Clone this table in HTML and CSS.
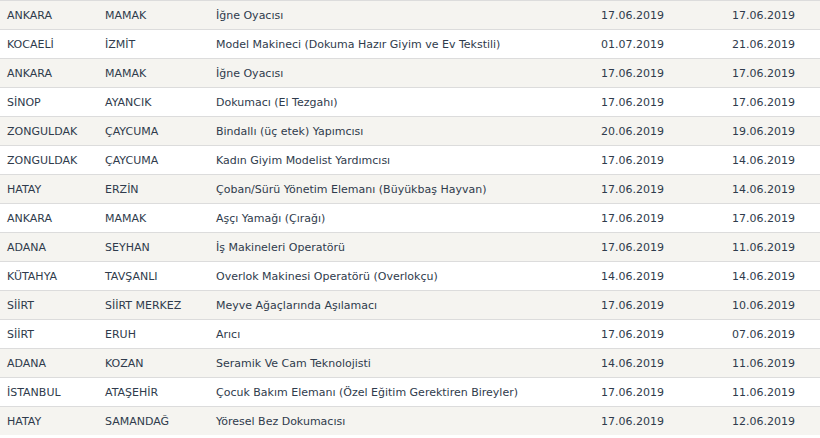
FILE: index.html
```html
<!DOCTYPE html>
<html lang="tr">
<head>
  <meta charset="UTF-8" />
  <meta name="viewport" content="width=device-width, initial-scale=1.0" />
  <title>İş İlanları</title>
  <link rel="stylesheet" href="styles.css">
</head>
<body>
  <table class="jobs">
    <colgroup>
      <col class="c-il" />
      <col class="c-ilce" />
      <col class="c-meslek" />
      <col class="c-tarih" />
      <col class="c-son" />
    </colgroup>
    <tbody>
      <tr><td>ANKARA</td><td>MAMAK</td><td>İğne Oyacısı</td><td>17.06.2019</td><td>17.06.2019</td></tr>
      <tr><td>KOCAELİ</td><td>İZMİT</td><td>Model Makineci (Dokuma Hazır Giyim ve Ev Tekstili)</td><td>01.07.2019</td><td>21.06.2019</td></tr>
      <tr><td>ANKARA</td><td>MAMAK</td><td>İğne Oyacısı</td><td>17.06.2019</td><td>17.06.2019</td></tr>
      <tr><td>SİNOP</td><td>AYANCIK</td><td>Dokumacı (El Tezgahı)</td><td>17.06.2019</td><td>17.06.2019</td></tr>
      <tr><td>ZONGULDAK</td><td>ÇAYCUMA</td><td>Bindallı (üç etek) Yapımcısı</td><td>20.06.2019</td><td>19.06.2019</td></tr>
      <tr><td>ZONGULDAK</td><td>ÇAYCUMA</td><td>Kadın Giyim Modelist Yardımcısı</td><td>17.06.2019</td><td>14.06.2019</td></tr>
      <tr><td>HATAY</td><td>ERZİN</td><td>Çoban/Sürü Yönetim Elemanı (Büyükbaş Hayvan)</td><td>17.06.2019</td><td>14.06.2019</td></tr>
      <tr><td>ANKARA</td><td>MAMAK</td><td>Aşçı Yamağı (Çırağı)</td><td>17.06.2019</td><td>17.06.2019</td></tr>
      <tr><td>ADANA</td><td>SEYHAN</td><td>İş Makineleri Operatörü</td><td>17.06.2019</td><td>11.06.2019</td></tr>
      <tr><td>KÜTAHYA</td><td>TAVŞANLI</td><td>Overlok Makinesi Operatörü (Overlokçu)</td><td>14.06.2019</td><td>14.06.2019</td></tr>
      <tr><td>SİİRT</td><td>SİİRT MERKEZ</td><td>Meyve Ağaçlarında Aşılamacı</td><td>17.06.2019</td><td>10.06.2019</td></tr>
      <tr><td>SİİRT</td><td>ERUH</td><td>Arıcı</td><td>17.06.2019</td><td>07.06.2019</td></tr>
      <tr><td>ADANA</td><td>KOZAN</td><td>Seramik Ve Cam Teknolojisti</td><td>14.06.2019</td><td>11.06.2019</td></tr>
      <tr><td>İSTANBUL</td><td>ATAŞEHİR</td><td>Çocuk Bakım Elemanı (Özel Eğitim Gerektiren Bireyler)</td><td>17.06.2019</td><td>11.06.2019</td></tr>
      <tr><td>HATAY</td><td>SAMANDAĞ</td><td>Yöresel Bez Dokumacısı</td><td>17.06.2019</td><td>12.06.2019</td></tr>
    </tbody>
  </table>
</body>
</html>
```

FILE: styles.css
```css
body { margin: 0; background: #fff; font-family: "DejaVu Sans", Verdana, sans-serif; color: #2f3b4c; }
.jobs { width: 820px; border-collapse: collapse; table-layout: fixed; font-size: 11px; }
.c-il { width: 98px; }
.c-ilce { width: 111px; }
.c-meslek { width: 385px; }
.c-tarih { width: 131px; }
.c-son { width: 95px; }
.jobs td { height: 28px; padding: 0 0 0 7px; border-top: 1px solid #dcdcdc; white-space: nowrap; overflow: hidden; vertical-align: middle; }
.jobs tr:nth-child(odd) td { background: #f5f4f0; }
.jobs tr:nth-child(even) td { background: #fff; }
```
